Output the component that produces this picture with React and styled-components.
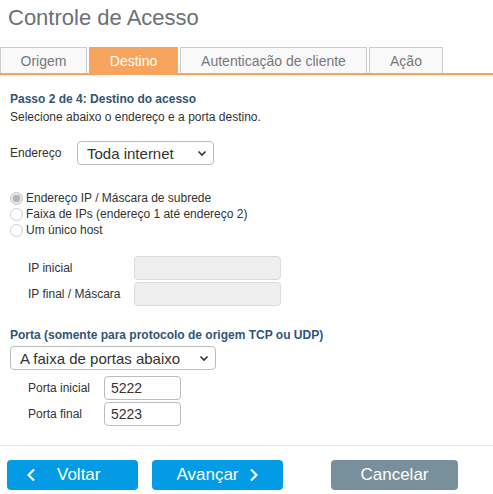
import React from "react";
import styled, { createGlobalStyle } from "styled-components";

const Global = createGlobalStyle`
  html, body { margin: 0; padding: 0; background: #fff; }
  body { font-family: "Liberation Sans", Arial, sans-serif; color: #333; }
  * { box-sizing: border-box; }
`;

const Page = styled.div`
  width: 493px;
  height: 494px;
  display: flex;
  flex-direction: column;
  overflow: hidden;
`;

const Title = styled.h1`
  margin: 0;
  padding: 5px 0 0 8px;
  height: 47px;
  font-size: 22px;
  font-weight: normal;
  line-height: 26px;
  color: #6b7178;
`;

const Tabs = styled.div`
  display: flex;
  gap: 2px;
  border-bottom: 2px solid #f7a55e;
  height: 28px;
`;

const Tab = styled.div`
  width: ${(p) => p.$w}px;
  height: 26px;
  display: flex;
  align-items: center;
  justify-content: center;
  font-size: 14px;
  color: ${(p) => (p.$active ? "#fff" : "#777")};
  background: ${(p) => (p.$active ? "#f7a55e" : "#f9f9f9")};
  border: 1px solid ${(p) => (p.$active ? "#f7a55e" : "#ccc")};
  border-bottom: none;
  padding-top: 1px;
`;

const Content = styled.div`
  padding: 16px 10px 0 10px;
  display: flex;
  flex-direction: column;
  flex: 1;
`;

const StepTitle = styled.div`
  font-size: 12px;
  font-weight: bold;
  color: #2f5677;
  line-height: 16px;
  margin-top: ${(p) => p.$mt || 0}px;
`;

const Text = styled.div`
  font-size: 12px;
  line-height: 16px;
  margin-top: 2px;
`;

const Row = styled.div`
  display: flex;
  align-items: center;
  margin-top: ${(p) => p.$mt || 0}px;
  padding-left: ${(p) => p.$pl || 0}px;
`;

const Label = styled.label`
  font-size: 12px;
  width: ${(p) => p.$w}px;
  flex-shrink: 0;
`;

const SelectBox = styled.div`
  width: ${(p) => p.$w}px;
  height: 24px;
  border: 1px solid #bbb;
  border-radius: 4px;
  display: flex;
  align-items: center;
  justify-content: space-between;
  padding: 0 6px 0 9px;
  font-size: 15px;
  color: #333;
  background: #fff;
`;

const Radios = styled.div`
  margin-top: 25px;
  display: flex;
  flex-direction: column;
`;

const RadioRow = styled.div`
  display: flex;
  align-items: center;
  height: 16px;
  font-size: 12px;
  color: #333;
`;

const RadioCircle = styled.span`
  width: 13px;
  height: 13px;
  border-radius: 50%;
  border: 1px solid ${(p) => (p.$checked ? "#c5c5c5" : "#ccc")};
  background: ${(p) =>
    p.$checked ? "radial-gradient(circle, #b5b5b5 0 3.5px, #e8e8e8 4px)" : "#fff"};
  margin: 0 3px 0 0;
  flex-shrink: 0;
`;

const Field = styled.div`
  width: ${(p) => p.$w}px;
  height: 24px;
  border: 1px solid ${(p) => (p.$disabled ? "#dcdcdc" : "#bbb")};
  background: ${(p) => (p.$disabled ? "#efefef" : "#fff")};
  border-radius: 4px;
  font-size: 14px;
  display: flex;
  align-items: center;
  padding-left: 6px;
  color: #333;
`;

const FieldGroup = styled.div`
  display: flex;
  flex-direction: column;
  gap: 2px;
  margin-top: ${(p) => p.$mt}px;
  padding-left: ${(p) => p.$pl}px;
`;

const Separator = styled.div`
  margin-top: auto;
  border-top: 1px solid #fde0c8;
`;

const Footer = styled.div`
  display: flex;
  padding: 14px 0 3px 7px;
  height: 48px;
`;

const Button = styled.button`
  width: ${(p) => p.$w}px;
  height: 30px;
  margin-left: ${(p) => p.$ml || 0}px;
  border: none;
  border-radius: 4px;
  background: ${(p) => (p.$gray ? "#78909c" : "#039be5")};
  color: #fff;
  font-family: "Liberation Sans", Arial, sans-serif;
  font-size: 17px;
  display: flex;
  align-items: center;
  justify-content: ${(p) => (p.$start ? "flex-start" : "center")};
  gap: ${(p) => p.$gap || 0}px;
  padding: 0 0 0 ${(p) => p.$pl || 0}px;
`;

const Chevron = ({ dir }) => (
  <svg width="10" height="14" viewBox="0 0 10 14">
    <path
      d={dir === "left" ? "M8 1.5 L2.5 7 L8 12.5" : "M2 1.5 L7.5 7 L2 12.5"}
      stroke="#fff"
      strokeWidth="2.2"
      fill="none"
    />
  </svg>
);

const Caret = () => (
  <svg width="10" height="7" viewBox="0 0 10 7">
    <path d="M1.5 1.5 L5 5 L8.5 1.5" stroke="#333" strokeWidth="1.6" fill="none" />
  </svg>
);

export default function App() {
  return (
    <Page>
      <Global />
      <Title>Controle de Acesso</Title>
      <Tabs>
        <Tab $w={87}>Origem</Tab>
        <Tab $w={89} $active>Destino</Tab>
        <Tab $w={187}>Autenticação de cliente</Tab>
        <Tab $w={74}>Ação</Tab>
      </Tabs>
      <Content>
        <StepTitle>Passo 2 de 4: Destino do acesso</StepTitle>
        <Text>Selecione abaixo o endereço e a porta destino.</Text>
        <Row $mt={16}>
          <Label $w={67}>Endereço</Label>
          <SelectBox $w={137}>
            Toda internet <Caret />
          </SelectBox>
        </Row>
        <Radios>
          <RadioRow>
            <RadioCircle $checked /> Endereço IP / Máscara de subrede
          </RadioRow>
          <RadioRow>
            <RadioCircle /> Faixa de IPs (endereço 1 até endereço 2)
          </RadioRow>
          <RadioRow>
            <RadioCircle /> Um único host
          </RadioRow>
        </Radios>
        <FieldGroup $mt={18} $pl={18}>
          <Row>
            <Label $w={106}>IP inicial</Label>
            <Field $w={147} $disabled />
          </Row>
          <Row>
            <Label $w={106}>IP final / Máscara</Label>
            <Field $w={147} $disabled />
          </Row>
        </FieldGroup>
        <StepTitle $mt={21}>
          Porta (somente para protocolo de origem TCP ou UDP)
        </StepTitle>
        <Row $mt={3}>
          <SelectBox $w={206}>
            A faixa de portas abaixo <Caret />
          </SelectBox>
        </Row>
        <FieldGroup $mt={6} $pl={18}>
          <Row>
            <Label $w={76}>Porta inicial</Label>
            <Field $w={77}>5222</Field>
          </Row>
          <Row>
            <Label $w={76}>Porta final</Label>
            <Field $w={77}>5223</Field>
          </Row>
        </FieldGroup>
      </Content>
      <Separator />
      <Footer>
        <Button $w={131} $start $pl={19} $gap={21}>
          <Chevron dir="left" />
          Voltar
        </Button>
        <Button $w={131} $ml={14} $gap={10}>
          Avançar <Chevron dir="right" />
        </Button>
        <Button $w={127} $ml={48} $gray>
          Cancelar
        </Button>
      </Footer>
    </Page>
  );
}
